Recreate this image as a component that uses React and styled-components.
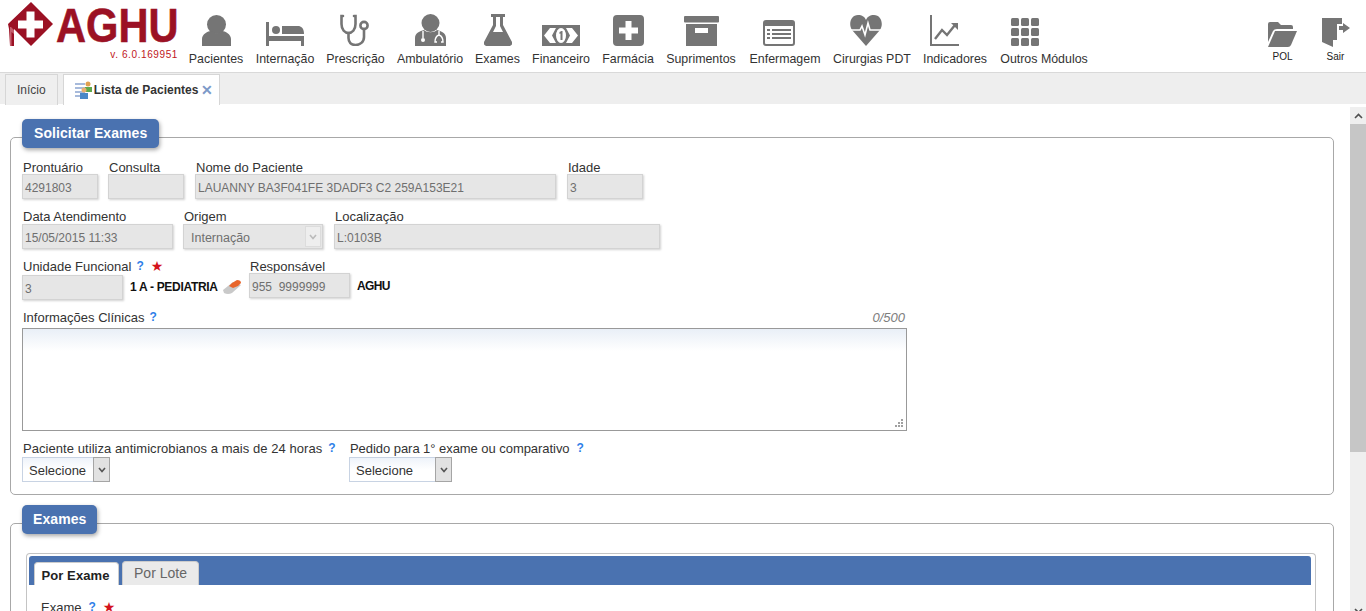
import React from 'react'
import styled, { createGlobalStyle } from 'styled-components'

const GREY = '#757575'

const Global = createGlobalStyle`
    html, body { margin: 0; padding: 0; height: 100%; overflow: hidden; }
    body { font-family: "Liberation Sans", Arial, sans-serif; font-size: 12px; color: #333; background: #fff; }
    * { box-sizing: border-box; }
`

const Page = styled.div`
    height: 611px;
    display: flex;
    flex-direction: column;
    overflow: hidden;
`

const Header = styled.header`
    height: 72px;
    flex: none;
    display: flex;
    background: #fff;
`

const LogoBox = styled.div`
    width: 189px;
    flex: none;
    padding: 2px 0 0 8px;
`

const LogoRow = styled.div`
    display: flex;
    align-items: center;
    height: 45px;
    svg { flex: none; }
`

const LogoText = styled.span`
    flex: none;
    font-size: 49px;
    line-height: 45px;
    font-weight: bold;
    color: #9b1124;
    margin: 1px -22px 0 3px;
    -webkit-text-stroke: 0.6px #9b1124;
    transform: scaleX(0.85);
    transform-origin: left center;
    display: block;
`

const Version = styled.div`
    font-size: 10px;
    letter-spacing: 0.6px;
    color: #c0161c;
    text-align: right;
    padding-right: 11px;
    margin-top: 2px;
`

const Menu = styled.nav`
    flex: 1;
    display: flex;
    padding-top: 13px;
`

const MenuItem = styled.a`
    width: ${p => p.$w}px;
    margin-right: ${p => p.$gap}px;
    flex: none;
    display: flex;
    flex-direction: column;
    align-items: center;
    font-size: 12.4px;
    color: #333;
    white-space: nowrap;
`

const IconBox = styled.div`
    height: 33px;
    display: flex;
    align-items: flex-end;
    justify-content: center;
    margin-bottom: 6px;
    margin-right: ${p => (p.$off || 0) * 2}px;
`

const RightMenu = styled.div`
    width: 106px;
    flex: none;
    display: flex;
    padding: 18px 0 0 0;
    margin-right: 4px;
`

const RightItem = styled.a`
    width: 53px;
    display: flex;
    flex-direction: column;
    align-items: center;
    font-size: 10px;
    color: #222;
`

const RightIcon = styled.div`
    height: 29px;
    margin-bottom: 4px;
    display: flex;
    align-items: flex-end;
`

const TabBar = styled.div`
    height: 33px;
    flex: none;
    background: #eeeeee;
    border-top: 1px solid #d9d9d9;
    border-bottom: 1px solid #d4d4d4;
    display: flex;
    align-items: flex-end;
    padding-left: 5px;
    gap: 5px;
    margin-bottom: -1px;
`

const Tab = styled.div`
    height: 31px;
    padding: 0 ${p => p.$active ? '6px' : '11px'} 0 11px;
    border: 1px solid #d6d6d6;
    border-bottom: none;
    background: ${p => p.$active ? '#fff' : '#efefef'};
    color: ${p => p.$active ? '#333' : '#444'};
    font-weight: ${p => p.$active ? 'bold' : 'normal'};
    font-size: 12px;
    display: flex;
    align-items: center;
    position: relative;
    top: 1px;
`

const Close = styled.span`
    margin-left: 3px;
    color: #7c99c8;
    font-size: 14px;
    font-weight: bold;
    line-height: 14px;
`

const Body = styled.div`
    flex: 1;
    display: flex;
    min-height: 0;
    background: #fff;
`

const Scroller = styled.main`
    flex: 1;
    min-width: 0;
    padding: 15px 16px 0 10px;
    overflow: hidden;
`

const Panel = styled.section`
    position: relative;
    border: 1px solid #a8a8a8;
    border-radius: 5px;
    margin-top: ${p => p.$top}px;
    height: ${p => p.$h}px;
    padding: ${p => p.$pad};
`

const Legend = styled.div`
    position: absolute;
    top: -19px;
    left: 11px;
    height: 29px;
    padding: 0 ${p => p.$px}px 2px;
    display: flex;
    align-items: center;
    background: #4a72b0;
    border-radius: 5px;
    box-shadow: 1px 2px 4px rgba(0,0,0,0.35);
    color: #fff;
    font-size: 14px;
    font-weight: bold;
    letter-spacing: 0.08px;
`

const Row = styled.div`
    display: flex;
    align-items: flex-start;
    margin-top: ${p => p.$mt || 0}px;
    margin-bottom: ${p => p.$mb || 0}px;
`

const Field = styled.div`
    width: ${p => p.$w}px;
    margin-right: ${p => p.$mr || 0}px;
    flex: none;
`

const Label = styled.div`
    height: 15px;
    line-height: 15px;
    margin-left: 1px;
    padding-top: 1px;
    font-size: 13px;
    letter-spacing: ${p => p.$ls || 0}px;
    color: #333;
    display: flex;
    align-items: center;
    white-space: nowrap;
`

const ReadOnly = styled.div`
    height: 25px;
    line-height: 26px;
    padding-left: ${p => p.$pl || 2}px;
    background: #e6e6e6;
    border: 1px solid #d3d3d3;
    box-shadow: 1px 1px 2px rgba(0,0,0,0.18);
    color: #6f6f6f;
    font-size: ${p => p.$fs || 12}px;
    white-space: nowrap;
    overflow: hidden;
    position: relative;
    top: ${p => p.$top || 0}px;
`

const DisabledArrow = styled.span`
    position: absolute;
    right: 1px;
    top: 1px;
    width: 16px;
    height: 21px;
    background: #eee;
    border: 1px solid #dcdcdc;
    display: flex;
    align-items: center;
    justify-content: center;
`

const Help = styled.span`
    color: #2f7fe8;
    font-weight: bold;
    font-size: 12px;
    letter-spacing: 0;
    margin-left: ${p => p.$ml || 5}px;
`

const Required = styled.span`
    color: #d4141c;
    font-family: "DejaVu Sans", sans-serif;
    font-size: 14px;
    font-weight: bold;
    line-height: 14px;
    margin-left: 7px;
`

const Strong = styled.span`
    font-weight: bold;
    font-size: 12px;
    letter-spacing: -0.3px;
    color: #111;
    white-space: nowrap;
`

const UnitName = styled(Strong)`
    margin: 22px 0 0 7px;
    width: 87px;
    flex: none;
`

const Eraser = styled.div`
    width: 19px;
    margin: 22px 7px 0 6px;
    flex: none;
`

const RespName = styled(Strong)`
    margin: 21px 0 0 7px;
    letter-spacing: -0.6px;
`

const LabelRow = styled.div`
    width: 885px;
    display: flex;
    justify-content: space-between;
    align-items: center;
    height: 15px;
`

const Counter = styled.span`
    font-style: italic;
    font-size: 13px;
    color: #7d7d7d;
    margin: 1px 2px 0 0;
`

const TextArea = styled.div`
    position: relative;
    width: 885px;
    height: 103px;
    margin-top: 4px;
    border: 1px solid #999;
    background: linear-gradient(#e9eff7 0, #fff 22px);
`

const Grip = styled.svg`
    position: absolute;
    right: 2px;
    bottom: 2px;
`

const SelectBox = styled.div`
    width: ${p => p.$w}px;
    height: 25px;
    margin-top: 2px;
    display: flex;
    justify-content: space-between;
    border: 1px solid #c8d3e3;
    background: linear-gradient(#eef3fa 0, #fff 12px);
    font-size: 13px;
    color: #333;
    line-height: 25px;
    padding-left: 6px;
`

const SelectArrow = styled.span`
    width: 17px;
    margin: -1px -1px -1px 0;
    background: #e2e2e2;
    border: 1px solid #a5a5a5;
    display: flex;
    align-items: center;
    justify-content: center;
`

const TabsFrame = styled.div`
    border: 1px solid #c4c4c4;
    border-bottom: none;
    border-radius: 4px 4px 0 0;
    padding: 2px 4px 0 2px;
`

const TabStrip = styled.div`
    height: 29px;
    background: #4a72b0;
    border-radius: 3px 3px 0 0;
    padding: 5px 0 0 5px;
    display: flex;
    align-items: flex-end;
    gap: 3px;
`

const InnerTab = styled.div`
    height: ${p => p.$active ? 23 : 24}px;
    align-self: flex-end;
    width: ${p => p.$w}px;
    border-radius: 4px 4px 0 0;
    background: ${p => p.$active ? '#fff' : '#eaeaea'};
    color: ${p => p.$active ? '#222' : '#666'};
    border: 1px solid #ccc;
    border-bottom: none;
    font-size: ${p => p.$active ? 13 : 14}px;
    font-weight: ${p => p.$active ? 'bold' : 'normal'};
    letter-spacing: ${p => p.$active ? 0.1 : 0}px;
    display: flex;
    align-items: center;
    justify-content: center;
    padding-top: ${p => p.$active ? 2 : 0}px;
    padding-bottom: ${p => p.$active ? 0 : 1}px;
    padding-right: ${p => p.$active ? 2 : 0}px;
`

const ExameLabel = styled(Label)`
    margin: 14px 0 0 12px;
`

const Scrollbar = styled.aside`
    width: 16px;
    flex: none;
    margin-top: 3px;
    background: #efefef;
    display: flex;
    flex-direction: column;
    align-items: stretch;
    justify-content: space-between;
`

const ScrollBtn = styled.div`
    height: 17px;
    display: flex;
    align-items: center;
    justify-content: center;
    margin-bottom: ${p => p.$clip ? -8 : 0}px;
`

const ScrollThumb = styled.div`
    height: 328px;
    background: #c6c6c6;
`

const ScrollTop = styled.div``

const Icon = ({ w, h, children }) => (
    <svg width={w} height={h} viewBox={`0 0 ${w} ${h}`} fill={GREY}>{children}</svg>
)

const Logo = () => (
    <svg width="45" height="45" viewBox="0 0 45 45">
        <path d="M23 0 L45 22 L23 44 L6 27 L6 44 L2 44 L1 27 L0 22 Z" fill="#9b1124" />
        <path d="M3 25 L6 28 V32 L3.500 30 V44 H2 V25 Z" fill="#c5606e" />
        <path d="M18.500 9.500 H26.500 V18.500 H35 V26.500 H26.500 V35.500 H18.500 V26.500 H10 V18.500 H18.500 Z" fill="#fff" />
    </svg>
)

const icons = {
    pacientes: (
        <Icon w={29} h={31}>
            <circle cx="14.500" cy="9.500" r="9.500" />
            <path d="M0 31 V24 C0 19 6 16 9 16 C12 19 17 19 20 16 C23 16 29 19 29 24 V31 Z" />
        </Icon>
    ),
    internacao: (
        <Icon w={38} h={24}>
            <path d="M0 0 H3 V14 H38 V24 H35 V19 H3 V24 H0 Z" />
            <circle cx="10" cy="8" r="4" />
            <path d="M16 4 H32 C35 4 38 6 38 12 H16 Z" />
        </Icon>
    ),
    prescricao: (
        <svg width="30" height="32" viewBox="0 0 30 32" fill="none" stroke={GREY} strokeWidth="2.600" strokeLinecap="round">
            <path d="M3 2 H1.500 V10 C1.500 16 5 19 8.500 19 C12 19 15.500 16 15.500 10 V2 H14" />
            <path d="M8.500 19 V24 C8.500 28 11 31 15.500 31 C20 31 24 28 24 23 V15" />
            <circle cx="24" cy="11.500" r="3.600" />
        </svg>
    ),
    ambulatorio: (
        <svg width="31" height="32" viewBox="0 0 31 32" fill={GREY}>
            <circle cx="15.500" cy="9" r="9" />
            <path d="M0 32 V24 C0 19 5 17 9 16 C12 19 19 19 22 16 C26 17 31 19 31 24 V32 Z" />
            <path d="M8 17 V24 M24 17 V21 C27 22 28 25 28 28 H26 M24 21 C21 22 20 25 20 28 H22" fill="none" stroke="#fff" strokeWidth="1.400" />
            <circle cx="8" cy="26" r="2" fill="#fff" />
        </svg>
    ),
    exames: (
        <Icon w={28} h={32}>
            <path d="M7 0 H21 V3 H19 V11 L28 28 C29 30 27 32 25 32 H3 C1 32 -1 30 0 28 L9 11 V3 H7 Z M12 3 V12 L9 18 H19 L16 12 V3 Z" fillRule="evenodd" />
        </Icon>
    ),
    financeiro: (
        <Icon w={38} h={21}>
            <rect width="38" height="21" />
            <path d="M2 10.500 L8 3 H14 L10 10.500 L14 18 H8 Z M36 10.500 L30 3 H24 L28 10.500 L24 18 H30 Z" fill="#fff" />
            <ellipse cx="19" cy="10.500" rx="5" ry="7.500" fill="#fff" />
            <path d="M17.500 7 L19.500 6 H20.500 V15 H18.500 V8.500 L17.500 9 Z" />
        </Icon>
    ),
    farmacia: (
        <Icon w={31} h={31}>
            <path fillRule="evenodd" d="M4 0 H27 A4 4 0 0 1 31 4 V27 A4 4 0 0 1 27 31 H4 A4 4 0 0 1 0 27 V4 A4 4 0 0 1 4 0 Z M12.500 6 V12.500 H6 V18.500 H12.500 V25 H18.500 V18.500 H25 V12.500 H18.500 V6 Z" />
        </Icon>
    ),
    suprimentos: (
        <Icon w={35} h={30}>
            <rect x="0" y="0" width="35" height="6.500" rx="1" />
            <path fillRule="evenodd" d="M2 8 H33 V30 H2 Z M11 12 V17 H24 V12 Z" />
        </Icon>
    ),
    enfermagem: (
        <svg width="32" height="26" viewBox="0 0 32 26" fill={GREY}>
            <path fillRule="evenodd" d="M3 0 H29 A3 3 0 0 1 32 3 V23 A3 3 0 0 1 29 26 H3 A3 3 0 0 1 0 23 V3 A3 3 0 0 1 3 0 Z M2 6 V23 A1 1 0 0 0 3 24 H29 A1 1 0 0 0 30 23 V6 Z" />
            <path d="M4 9 H7 V11 H4 Z M9 9 H28 V11 H9 Z M4 13 H7 V15 H4 Z M9 13 H28 V15 H9 Z M4 17 H7 V19 H4 Z M9 17 H28 V19 H9 Z" />
        </svg>
    ),
    cirurgias: (
        <svg width="32" height="31" viewBox="0 0 32 31" fill={GREY}>
            <path d="M16 31 L2 15 C-2 9 1 0 8 0 C12 0 15 2 16 5 C17 2 20 0 24 0 C31 0 34 9 30 15 Z" />
            <path d="M0 15 H10 L12 11 L15 20 L18 8 L20 15 H32" fill="none" stroke="#fff" strokeWidth="1.600" />
        </svg>
    ),
    indicadores: (
        <svg width="29" height="31" viewBox="0 0 29 31" fill={GREY}>
            <path d="M0 0 H2 V29 H29 V31 H0 Z" />
            <path d="M5 24 L12 15 L17 20 L25 10" fill="none" stroke={GREY} strokeWidth="2.400" />
            <path d="M21 8 H28 V15 Z" />
        </svg>
    ),
    outros: (
        <svg width="28" height="28" viewBox="0 0 28 28" fill={GREY}>
            {[0, 10, 20].map(y => [0, 10, 20].map(x => (
                <rect key={`${x}-${y}`} x={x} y={y} width="8" height="8" rx="1.500" />
            )))}
        </svg>
    ),
}

const menu = [
    ['Pacientes', 'pacientes', 54, 13, 0],
    ['Internação', 'internacao', 58, 12, 0],
    ['Prescrição', 'prescricao', 59, 12, 1],
    ['Ambulatório', 'ambulatorio', 66, 12, 0],
    ['Exames', 'exames', 45, 12, 0],
    ['Financeiro', 'financeiro', 58, 12, 0],
    ['Farmácia', 'farmacia', 52, 12, 0],
    ['Suprimentos', 'suprimentos', 70, 13, 0],
    ['Enfermagem', 'enfermagem', 72, 12, 6],
    ['Cirurgias PDT', 'cirurgias', 78, 12, 6],
    ['Indicadores', 'indicadores', 64, 14, 11],
    ['Outros Módulos', 'outros', 86, 0, 19],
]

const Chevron = ({ color }) => (
    <svg width="8" height="6" viewBox="0 0 8 6" fill="none" stroke={color} strokeWidth="1.600">
        <path d="M1 1 L4 4.500 L7 1" />
    </svg>
)

const App = () => (
    <Page>
        <Global />
        <Header>
            <LogoBox>
                <LogoRow>
                    <Logo />
                    <LogoText>AGHU</LogoText>
                </LogoRow>
                <Version>v. 6.0.169951</Version>
            </LogoBox>
            <Menu>
                {menu.map(([label, icon, w, gap, off]) => (
                    <MenuItem key={label} $w={w} $gap={gap}>
                        <IconBox $off={off}>{icons[icon]}</IconBox>
                        {label}
                    </MenuItem>
                ))}
            </Menu>
            <RightMenu>
                <RightItem>
                    <RightIcon>
                        <svg width="29" height="25" viewBox="0 0 29 25" fill={GREY}>
                            <path d="M0 2 Q0 0 2 0 H10 L13 3 H23 Q25 3 25 5 V7 H9 Q6 7 5 9 L0 20 Z" />
                            <path d="M7 9 H29 L23 23 Q22 25 20 25 H0 Z" />
                        </svg>
                    </RightIcon>
                    POL
                </RightItem>
                <RightItem>
                    <RightIcon>
                        <svg width="28" height="29" viewBox="0 0 28 29" fill={GREY}>
                            <path d="M0 0 H20 V6 H15 V22 H11 V29 L0 24 Z" />
                            <path d="M21 5 L28 10 L21 15 V12 H17 V8 H21 Z" />
                        </svg>
                    </RightIcon>
                    Sair
                </RightItem>
            </RightMenu>
        </Header>
        <TabBar>
            <Tab>Início</Tab>
            <Tab $active>
                <svg width="19" height="18" viewBox="0 0 19 18">
                    <path d="M0 3 H10 M0 7 H10 M0 11 H10 M0 15 H10" stroke="#8aa4d0" strokeWidth="1.500" />
                    <circle cx="13" cy="3" r="2.500" fill="#e0a050" />
                    <path d="M10 6 H17 V11 H10 Z" fill="#5fa84a" />
                    <circle cx="9" cy="9" r="2.500" fill="#e8b070" />
                    <path d="M5 12 H13 V18 H5 Z" fill="#4a88c8" />
                </svg>
                Lista de Pacientes
                <Close>✕</Close>
            </Tab>
        </TabBar>
        <Body>
            <Scroller>
                <Panel $top={18} $h={358} $pad="21px 11px 0 11px">
                    <Legend $px={12}>Solicitar Exames</Legend>
                    <Row $mb={9}>
                        <Field $w={76} $mr={10}>
                            <Label>Prontuário</Label>
                            <ReadOnly>4291803</ReadOnly>
                        </Field>
                        <Field $w={76} $mr={11}>
                            <Label>Consulta</Label>
                            <ReadOnly />
                        </Field>
                        <Field $w={361} $mr={11}>
                            <Label>Nome do Paciente</Label>
                            <ReadOnly>LAUANNY BA3F041FE 3DADF3 C2 259A153E21</ReadOnly>
                        </Field>
                        <Field $w={76}>
                            <Label>Idade</Label>
                            <ReadOnly>3</ReadOnly>
                        </Field>
                    </Row>
                    <Row $mb={10}>
                        <Field $w={151} $mr={10}>
                            <Label>Data Atendimento</Label>
                            <ReadOnly $top={1}>15/05/2015 11:33</ReadOnly>
                        </Field>
                        <Field $w={140} $mr={11}>
                            <Label>Origem</Label>
                            <ReadOnly $top={1} $pl={7} $fs={12.500}>
                                Internação
                                <DisabledArrow><Chevron color="#bbb" /></DisabledArrow>
                            </ReadOnly>
                        </Field>
                        <Field $w={326}>
                            <Label>Localização</Label>
                            <ReadOnly $top={1}>L:0103B</ReadOnly>
                        </Field>
                    </Row>
                    <Row $mb={11}>
                        <Field $w={101}>
                            <Label>Unidade Funcional<Help>?</Help><Required>★</Required></Label>
                            <ReadOnly $top={2}>3</ReadOnly>
                        </Field>
                        <UnitName>1 A - PEDIATRIA</UnitName>
                        <Eraser>
                            <svg width="19" height="15" viewBox="0 0 19 15">
                                <path d="M0 10 L10 2 L18 5 L9 13 Q5 15 1 13 Z" fill="#c9c9c9" />
                                <path d="M9 3 L14 0 Q18 0 18 3 L15 6 L10 8 L6 6 Z" fill="#e8662c" />
                            </svg>
                        </Eraser>
                        <Field $w={101}>
                            <Label>Responsável</Label>
                            <ReadOnly>955&nbsp;&nbsp;9999999</ReadOnly>
                        </Field>
                        <RespName>AGHU</RespName>
                    </Row>
                    <LabelRow>
                        <Label>Informações Clínicas<Help>?</Help></Label>
                        <Counter>0/500</Counter>
                    </LabelRow>
                    <TextArea>
                        <Grip width="10" height="10" viewBox="0 0 10 10" fill="#a0a0a0">
                            <rect x="7" y="1" width="2" height="2" />
                            <rect x="4" y="4" width="2" height="2" />
                            <rect x="7" y="4" width="2" height="2" />
                            <rect x="1" y="7" width="2" height="2" />
                            <rect x="4" y="7" width="2" height="2" />
                            <rect x="7" y="7" width="2" height="2" />
                        </Grip>
                    </TextArea>
                    <Row $mt={9}>
                        <Field $w={327}>
                            <Label $ls={0.06}>Paciente utiliza antimicrobianos a mais de 24 horas<Help $ml={6}>?</Help></Label>
                            <SelectBox $w={88}>Selecione<SelectArrow><Chevron color="#555" /></SelectArrow></SelectBox>
                        </Field>
                        <Field $w={300}>
                            <Label $ls={-0.05}>Pedido para 1° exame ou comparativo<Help $ml={7}>?</Help></Label>
                            <SelectBox $w={103}>Selecione<SelectArrow><Chevron color="#555" /></SelectArrow></SelectBox>
                        </Field>
                    </Row>
                </Panel>
                <Panel $top={28} $h={200} $pad="29px 17px 0 15px">
                    <Legend $px={11}>Exames</Legend>
                    <TabsFrame>
                        <TabStrip>
                            <InnerTab $active $w={85}>Por Exame</InnerTab>
                            <InnerTab $w={77}>Por Lote</InnerTab>
                        </TabStrip>
                        <ExameLabel>Exame<Help $ml={7}>?</Help><Required>★</Required></ExameLabel>
                    </TabsFrame>
                </Panel>
            </Scroller>
            <Scrollbar>
                <ScrollTop>
                    <ScrollBtn>
                        <svg width="9" height="6" viewBox="0 0 9 6" fill="none" stroke="#505050" strokeWidth="1.600"><path d="M1 5 L4.500 1.500 L8 5" /></svg>
                    </ScrollBtn>
                    <ScrollThumb />
                </ScrollTop>
                <ScrollBtn $clip>
                    <svg width="9" height="6" viewBox="0 0 9 6" fill="none" stroke="#505050" strokeWidth="1.600"><path d="M1 1 L4.500 4.500 L8 1" /></svg>
                </ScrollBtn>
            </Scrollbar>
        </Body>
    </Page>
)

export default App
